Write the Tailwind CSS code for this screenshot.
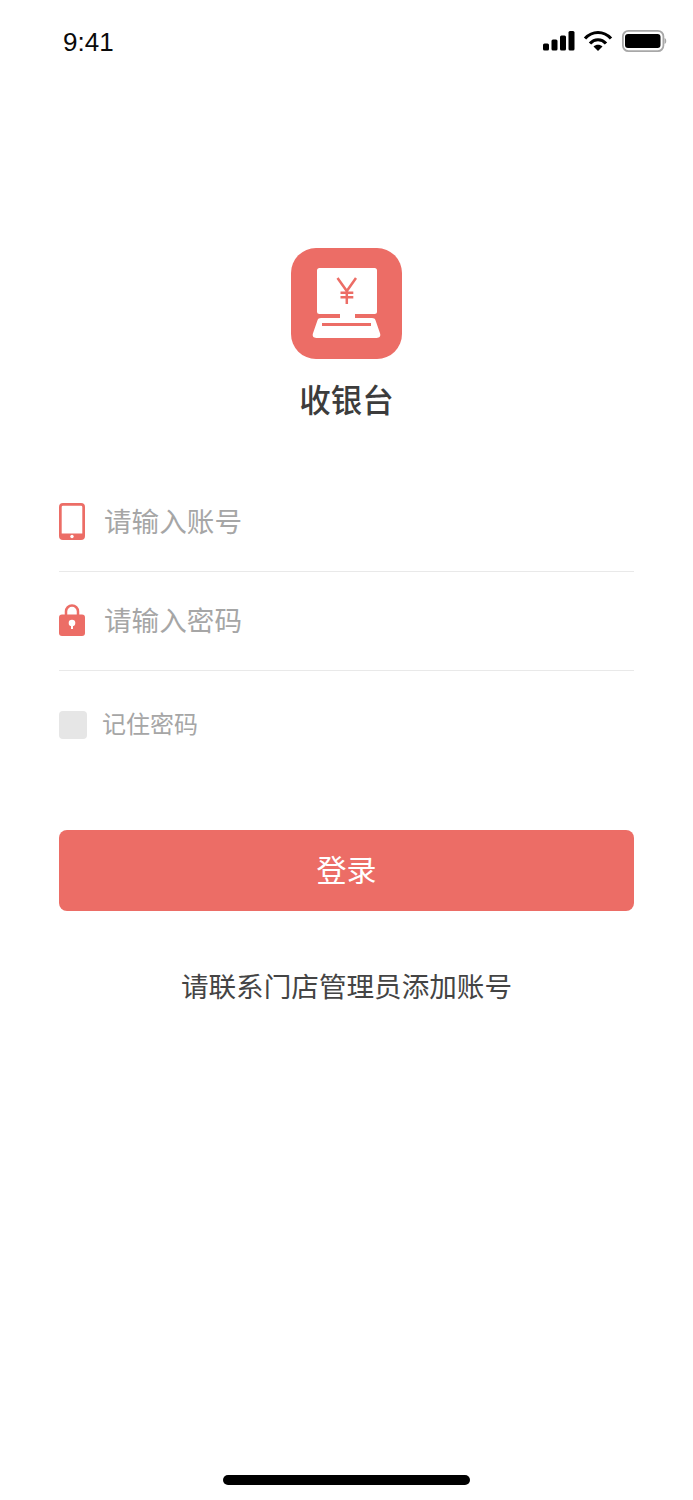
<!DOCTYPE html>
<html lang="zh"><head><meta charset="utf-8">
<script src="https://cdn.jsdelivr.net/npm/@tailwindcss/browser@4"></script>
</head>
<body class="bg-white">
<div class="w-[693px] h-[1500px] relative flex flex-col items-center font-['Liberation_Sans','Noto_Sans_CJK_SC',sans-serif] overflow-hidden">
  <div class="w-full h-[84px] pl-[63px] pr-[26px] flex items-center justify-between">
    <span class="font-['Liberation_Sans',sans-serif] text-[26px] leading-none text-[#0a0a0a]">9:41</span>
    <svg width="126" height="24" viewBox="0 0 126 24">
      <g fill="#000"><rect x="2" y="13.500" width="6" height="7" rx="1.500"/><rect x="10.500" y="9.500" width="6" height="11" rx="1.500"/><rect x="19" y="5.500" width="6" height="15" rx="1.500"/><rect x="27.500" y="1" width="6" height="19.500" rx="1.500"/></g>
      <g fill="none" stroke="#000" stroke-width="3.200"><path d="M44 8.500C51.500 .5 62.500 .5 70 8.500"/><path d="M49 13.500C53.500 8.500 60.500 8.500 65 13.500"/></g>
      <path d="M52.500 16.500C55 14.300 59 14.300 61.500 16.500L57 21Z" fill="#000"/>
      <rect x="81.900" y="0.900" width="40.500" height="20.200" rx="5.500" fill="none" stroke="#a8a8a8" stroke-width="1.800"/>
      <rect x="84" y="4" width="35.500" height="14" rx="3" fill="#000"/>
      <path d="M123.500 8v6c2.300-.6 2.300-5.400 0-6Z" fill="#a8a8a8"/>
    </svg>
  </div>
  <div class="mt-[164px] w-[111px] h-[111px] rounded-[25px] bg-[#ec6d66] flex items-center justify-center">
    <svg width="111" height="111" viewBox="0 0 111 111">
      <rect x="26" y="20" width="60" height="46" rx="2.500" fill="#fff"/>
      <rect x="49" y="65" width="15" height="6" fill="#fff"/>
      <path fill="#fff" d="M30 70h51c2 0 3 .8 3.500 2.300l4.500 13c1 2.800-.5 4.700-3.300 4.700H25.300c-2.800 0-4.300-1.900-3.300-4.700l4.500-13c.5-1.500 1.500-2.300 3.500-2.300Z"/>
      <rect x="31" y="75" width="49" height="3" fill="#ec6d66"/>
      <path fill="none" stroke="#ec6d66" stroke-width="2.500" d="M46.500 30l9.300 13L65 30M55.800 43V56M49.500 44.700h12.800M49.500 49.300h12.800"/>
    </svg>
  </div>
  <h1 class="mt-[21px] text-[31.500px] leading-[42px] font-medium text-[#3c3c3c]">收银台</h1>
  <div class="w-[575px] mt-[49px]">
    <div class="h-[101px] flex items-center border-b border-[#e9e9e9] pb-[3px]">
      <svg width="26" height="37" viewBox="0 0 26 37" class="shrink-0 mt-[4px]">
        <path fill="#ec6d66" fill-rule="evenodd" d="M4 0h18a4 4 0 0 1 4 4v29a4 4 0 0 1-4 4H4a4 4 0 0 1-4-4V4a4 4 0 0 1 4-4Zm0 2.700a1.300 1.300 0 0 0-1.300 1.300v26.500h20.600V4a1.300 1.300 0 0 0-1.300-1.300Z"/>
        <circle cx="13" cy="33.500" r="1.700" fill="#fff"/>
      </svg>
      <span class="ml-[19px] mt-[6px] text-[27.600px] text-[#a6a6a6]">请输入账号</span>
    </div>
    <div class="h-[99px] flex items-center border-b border-[#e9e9e9] pb-[2px]">
      <svg width="26" height="32" viewBox="0 0 26 32" class="shrink-0 -mt-[1px]">
        <path fill="none" stroke="#ec6d66" stroke-width="2.500" d="M7 12V7.500a6 6 0 0 1 12 0V12"/>
        <rect y="10.500" width="26" height="21.500" rx="3" fill="#ec6d66"/>
        <circle cx="13" cy="19" r="3.300" fill="#fff"/><rect x="12" y="19" width="2" height="6" fill="#fff"/>
      </svg>
      <span class="ml-[19px] mt-[4px] text-[27.600px] text-[#a6a6a6]">请输入密码</span>
    </div>
    <div class="mt-[39px] h-[30px] flex items-center">
      <span class="w-[28px] h-[28px] rounded-[4px] bg-[#e6e6e6]"></span>
      <span class="ml-[15px] text-[24px] leading-[30px] text-[#a6a6a6]">记住密码</span>
    </div>
    <button class="mt-[90px] w-full h-[81px] rounded-[8px] bg-[#ec6d66] text-white text-[30px]">登录</button>
  </div>
  <p class="mt-[58px] text-[27.600px] leading-[38px] text-[#444]">请联系门店管理员添加账号</p>
  <div class="absolute bottom-[15px] left-[223px] w-[247px] h-[10px] rounded-full bg-black"></div>
</div>
</body></html>
